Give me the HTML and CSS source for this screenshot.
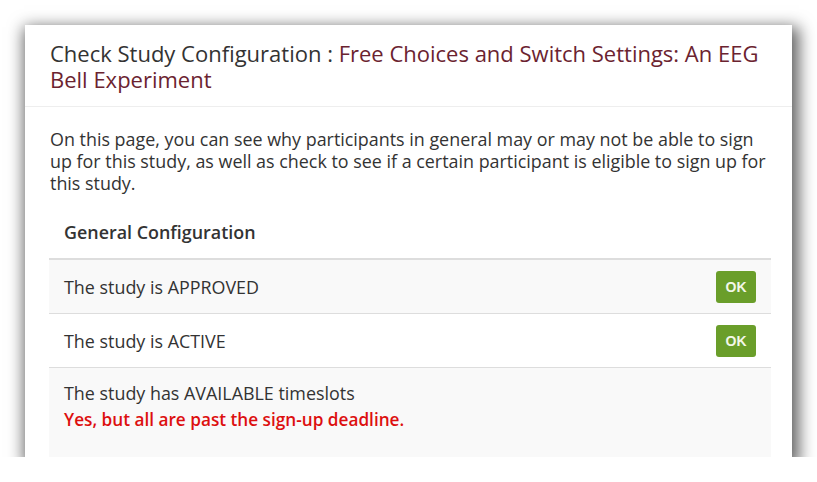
FILE: index.html
```html
<!DOCTYPE html>
<html>
<head>
<meta charset="utf-8">
<link rel="stylesheet" href="styles.css">
</head>
<body>
<div class="card">
  <div class="card-header">
    <h1 class="title">Check Study Configuration : <span class="study">Free Choices and Switch Settings: An EEG Bell Experiment</span></h1>
  </div>
  <div class="card-body">
    <p class="intro">On this page, you can see why participants in general may or may not be able to sign up for this study, as well as check to see if a certain participant is eligible to sign up for this study.</p>
    <div class="table">
      <div class="thead">General Configuration</div>
      <div class="row striped">
        <span>The study is APPROVED</span>
        <span class="ok">OK</span>
      </div>
      <div class="row">
        <span>The study is ACTIVE</span>
        <span class="ok">OK</span>
      </div>
      <div class="row striped tall">
        <div>
          <div>The study has AVAILABLE timeslots</div>
          <div class="warn">Yes, but all are past the sign-up deadline.</div>
        </div>
      </div>
    </div>
  </div>
</div>
</body>
</html>
```
FILE: styles.css
```css
html, body {
  margin: 0;
  padding: 0;
  background: #ffffff;
  overflow: hidden;
}
body {
  padding: 25px 25px 0 25px;
  font-family: "Open Sans", "Noto Sans", sans-serif;
  color: #333333;
}
.card {
  width: 767px;
  height: 432px;
  background: #ffffff;
  box-shadow: 3px 6px 15px 4px rgba(0, 0, 0, 0.62);
  overflow: hidden;
}
.card-header {
  padding: 15px 25px 14px 25px;
  border-bottom: 1px solid #eeeeee;
}
.title {
  margin: 0;
  font-weight: 400;
  font-size: 22px;
  line-height: 26px;
  color: #333333;
}
.study {
  color: #6b2330;
}
.card-body {
  padding: 21px 21px 0 24px;
}
.intro {
  margin: 0 0 12px 1px;
  font-size: 17.9px;
  line-height: 22px;
}
.thead {
  padding: 14px 15px;
  font-weight: 600;
  font-size: 17.9px;
  line-height: 24px;
  border-bottom: 2px solid #dddddd;
}
.row {
  display: flex;
  align-items: center;
  justify-content: space-between;
  height: 53px;
  padding: 0 15px;
  border-bottom: 1px solid #dddddd;
  font-size: 17.9px;
  line-height: 24px;
}
.row.striped {
  background: #f9f9f9;
}
.row.tall {
  height: auto;
  align-items: flex-start;
  padding-top: 13px;
  padding-bottom: 40px;
  border-bottom: none;
}
.warn {
  color: #dd0f0f;
  font-weight: 600;
  font-size: 17.2px;
  margin-top: 3px;
}
.ok {
  display: inline-flex;
  align-items: center;
  justify-content: center;
  width: 40px;
  height: 32px;
  background: #6a9e2a;
  border-radius: 3px;
  color: #f2f7e8;
  font-family: "Liberation Sans", Arial, sans-serif;
  font-weight: 700;
  font-size: 14px;
}
```
